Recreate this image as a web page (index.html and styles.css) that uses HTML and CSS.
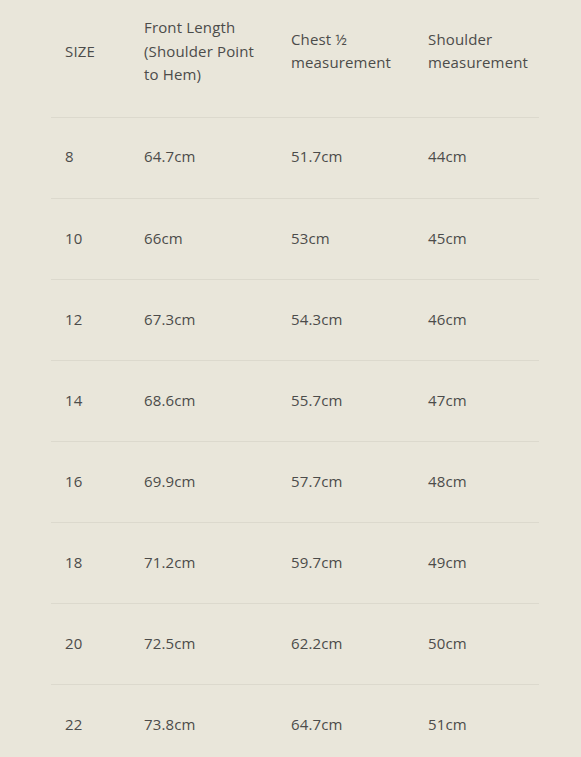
FILE: index.html
```html
<!DOCTYPE html>
<html>
<head>
<meta charset="utf-8">
<link rel="stylesheet" href="styles.css">
</head>
<body>
<table class="size-table">
  <colgroup>
    <col class="c1"><col class="c2"><col class="c3"><col class="c4">
  </colgroup>
  <thead>
    <tr>
      <th>SIZE</th>
      <th>Front Length (Shoulder Point to Hem)</th>
      <th>Chest ½ measurement</th>
      <th>Shoulder measurement</th>
    </tr>
  </thead>
  <tbody>
    <tr><td>8</td><td>64.7cm</td><td>51.7cm</td><td>44cm</td></tr>
    <tr><td>10</td><td>66cm</td><td>53cm</td><td>45cm</td></tr>
    <tr><td>12</td><td>67.3cm</td><td>54.3cm</td><td>46cm</td></tr>
    <tr><td>14</td><td>68.6cm</td><td>55.7cm</td><td>47cm</td></tr>
    <tr><td>16</td><td>69.9cm</td><td>57.7cm</td><td>48cm</td></tr>
    <tr><td>18</td><td>71.2cm</td><td>59.7cm</td><td>49cm</td></tr>
    <tr><td>20</td><td>72.5cm</td><td>62.2cm</td><td>50cm</td></tr>
    <tr><td>22</td><td>73.8cm</td><td>64.7cm</td><td>51cm</td></tr>
  </tbody>
</table>
</body>
</html>
```
FILE: styles.css
```css
html, body {
  margin: 0;
  padding: 0;
  background: #e9e6da;
}
body {
  font-family: "Open Sans", "Noto Sans", sans-serif;
  font-size: 15px;
  line-height: 23.5px;
  letter-spacing: 0.15px;
  color: #4c4c4a;
}
.size-table {
  margin-left: 51px;
  width: 488px;
  table-layout: fixed;
  border-collapse: collapse;
}
.c1 { width: 79px; }
.c2 { width: 147px; }
.c3 { width: 137px; }
.c4 { width: 125px; }
.size-table th {
  font-weight: normal;
  text-align: left;
  vertical-align: middle;
  padding: 16px 14px 30px 14px;
  height: 70.6px;
  border-bottom: 1px solid #dcd9cd;
}
.size-table td {
  text-align: left;
  vertical-align: middle;
  padding: 0 14px 1px 14px;
  height: 79.14px;
  border-bottom: 1px solid #dcd9cd;
}
```
